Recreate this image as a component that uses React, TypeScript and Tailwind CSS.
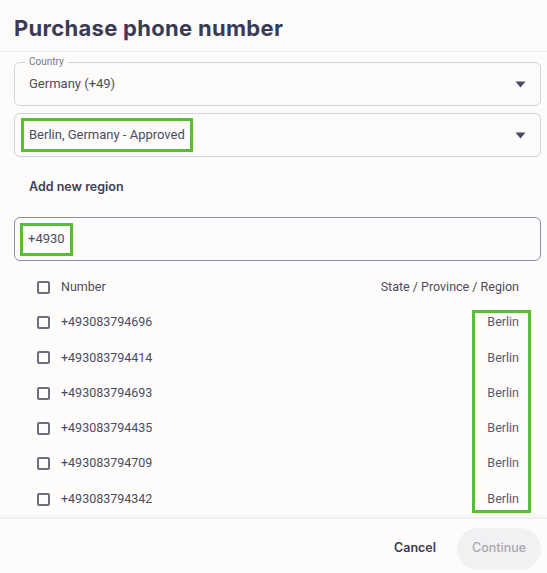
import React from "react";

const numbers = [
  "+493083794696",
  "+493083794414",
  "+493083794693",
  "+493083794435",
  "+493083794709",
  "+493083794342",
];

function Caret() {
  return (
    <svg width="11" height="7" viewBox="0 0 11 7" className="shrink-0">
      <path d="M0.5 0.5 L10.5 0.5 L5.5 6.5 Z" fill="#4a4966" />
    </svg>
  );
}

function Box() {
  return <div className="w-[13px] h-[13px] border-2 border-[#6f6e80] rounded-[2px] shrink-0" />;
}

export default function App() {
  return (
    <div className="w-[547px] h-[573px] bg-[#fcfbfa] flex flex-col overflow-hidden font-['Roboto',sans-serif] text-[#4a4960]">
      <div className="h-[52px] flex items-center px-[14px] pt-[6px] border-b border-[#f1efee]">
        <h1 className="font-['Inter',sans-serif] font-bold text-[22px] text-[#3b3a56] tracking-[0.3px]">
          Purchase phone number
        </h1>
      </div>
      <div className="flex-1 overflow-hidden pl-[14px] pr-[6px] pt-[10px] flex flex-col bg-[#fdfcfb]">
        <div className="relative h-[44px] border border-[#d3d2d4] rounded-[6px] flex items-center pl-[14px] pr-[14px]">
          <span className="absolute left-[10px] top-[-7px] bg-[#fdfcfb] px-[4px] text-[10px] leading-[12px] text-[#7a7986]">
            Country
          </span>
          <span className="flex-1 text-[13px] text-[#4c4b5f]">Germany (+49)</span>
          <Caret />
        </div>
        <div className="mt-[7px] h-[44px] border border-[#d3d2d4] rounded-[6px] flex items-center pl-[6px] pr-[14px]">
          <span className="flex-1">
            <span className="inline-flex items-center h-[34px] px-[5px] border-[3px] border-[#55c034] text-[13px] text-[#4c4b5f]">
              Berlin, Germany - Approved
            </span>
          </span>
          <Caret />
        </div>
        <div className="h-[60px] flex items-center pl-[15px]">
          <span className="font-['Inter',sans-serif] font-semibold text-[12.5px] text-[#3f3e55]">Add new region</span>
        </div>
        <div className="h-[44px] border border-[#8f8db5] rounded-[6px] flex items-center pl-[5px]">
          <span className="inline-flex items-center h-[33px] px-[5px] border-[3px] border-[#55c034] text-[13px] text-[#4c4b5f]">
            +4930
          </span>
        </div>
        <div className="relative mt-[9px]">
          <div className="h-[35px] flex items-center pl-[23px] pr-[22px]">
            <Box />
            <span className="ml-[11px] flex-1 text-[12.5px] text-[#4c4b5f]">Number</span>
            <span className="text-[12.5px] text-[#4c4b5f]">State / Province / Region</span>
          </div>
          {numbers.map((n) => (
            <div key={n} className="h-[35.3px] flex items-center pl-[23px] pr-[22px]">
              <Box />
              <span className="ml-[11px] flex-1 text-[12.5px] text-[#4c4b5f]">{n}</span>
              <span className="text-[12.5px] text-[#5a596c]">Berlin</span>
            </div>
          ))}
          <div className="absolute left-[458px] top-[40px] w-[59px] h-[203px] border-[3px] border-[#55c034] pointer-events-none" />
        </div>
      </div>
      <div className="h-[55px] shrink-0 bg-[#fdfcfb] shadow-[0_-2px_4px_rgba(0,0,0,0.05)] border-t border-[#efedec] flex items-center justify-end pr-[6px] pt-[5px] gap-[21px] relative">
        <span className="font-['Inter',sans-serif] font-semibold text-[12.5px] text-[#3b3a50]">Cancel</span>
        <div className="w-[84px] h-[42px] rounded-full bg-[#f1f0f2] flex items-center justify-center text-[12.5px] font-['Inter',sans-serif] font-medium text-[#a9a8b4]">
          Continue
        </div>
      </div>
    </div>
  );
}
